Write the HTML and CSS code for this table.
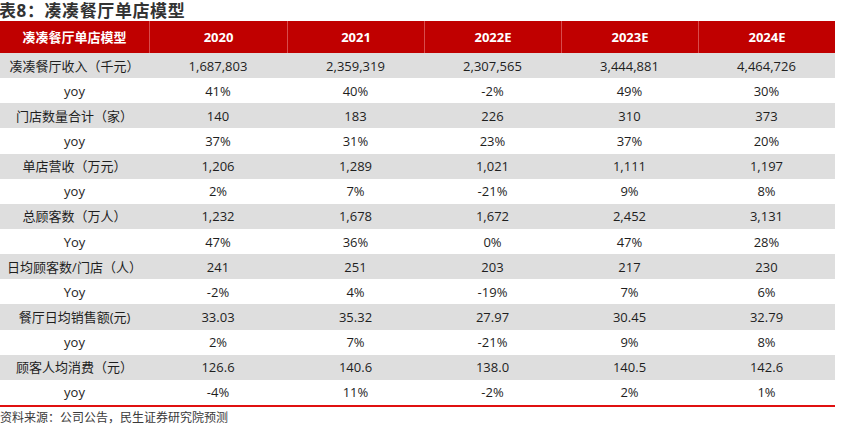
FILE: index.html
```html
<!DOCTYPE html>
<html lang="zh">
<head>
<meta charset="utf-8">
<title>凑凑餐厅单店模型</title>
<link rel="stylesheet" href="styles.css">
</head>
<body>
<div class="title">表8：凑凑餐厅单店模型</div>
<div class="table">
  <div class="row head">
    <div class="cell">凑凑餐厅单店模型</div>
    <div class="cell">2020</div>
    <div class="cell">2021</div>
    <div class="cell">2022E</div>
    <div class="cell">2023E</div>
    <div class="cell">2024E</div>
  </div>
  <div class="row shade">
    <div class="cell">凑凑餐厅收入（千元）</div>
    <div class="cell">1,687,803</div><div class="cell">2,359,319</div><div class="cell">2,307,565</div><div class="cell">3,444,881</div><div class="cell">4,464,726</div>
  </div>
  <div class="row">
    <div class="cell">yoy</div>
    <div class="cell">41%</div><div class="cell">40%</div><div class="cell">-2%</div><div class="cell">49%</div><div class="cell">30%</div>
  </div>
  <div class="row shade">
    <div class="cell">门店数量合计（家）</div>
    <div class="cell">140</div><div class="cell">183</div><div class="cell">226</div><div class="cell">310</div><div class="cell">373</div>
  </div>
  <div class="row">
    <div class="cell">yoy</div>
    <div class="cell">37%</div><div class="cell">31%</div><div class="cell">23%</div><div class="cell">37%</div><div class="cell">20%</div>
  </div>
  <div class="row shade">
    <div class="cell">单店营收（万元）</div>
    <div class="cell">1,206</div><div class="cell">1,289</div><div class="cell">1,021</div><div class="cell">1,111</div><div class="cell">1,197</div>
  </div>
  <div class="row">
    <div class="cell">yoy</div>
    <div class="cell">2%</div><div class="cell">7%</div><div class="cell">-21%</div><div class="cell">9%</div><div class="cell">8%</div>
  </div>
  <div class="row shade">
    <div class="cell">总顾客数（万人）</div>
    <div class="cell">1,232</div><div class="cell">1,678</div><div class="cell">1,672</div><div class="cell">2,452</div><div class="cell">3,131</div>
  </div>
  <div class="row">
    <div class="cell">Yoy</div>
    <div class="cell">47%</div><div class="cell">36%</div><div class="cell">0%</div><div class="cell">47%</div><div class="cell">28%</div>
  </div>
  <div class="row shade">
    <div class="cell">日均顾客数/门店（人）</div>
    <div class="cell">241</div><div class="cell">251</div><div class="cell">203</div><div class="cell">217</div><div class="cell">230</div>
  </div>
  <div class="row">
    <div class="cell">Yoy</div>
    <div class="cell">-2%</div><div class="cell">4%</div><div class="cell">-19%</div><div class="cell">7%</div><div class="cell">6%</div>
  </div>
  <div class="row shade">
    <div class="cell">餐厅日均销售额(元)</div>
    <div class="cell">33.03</div><div class="cell">35.32</div><div class="cell">27.97</div><div class="cell">30.45</div><div class="cell">32.79</div>
  </div>
  <div class="row">
    <div class="cell">yoy</div>
    <div class="cell">2%</div><div class="cell">7%</div><div class="cell">-21%</div><div class="cell">9%</div><div class="cell">8%</div>
  </div>
  <div class="row shade">
    <div class="cell">顾客人均消费（元）</div>
    <div class="cell">126.6</div><div class="cell">140.6</div><div class="cell">138.0</div><div class="cell">140.5</div><div class="cell">142.6</div>
  </div>
  <div class="row last">
    <div class="cell">yoy</div>
    <div class="cell">-4%</div><div class="cell">11%</div><div class="cell">-2%</div><div class="cell">2%</div><div class="cell">1%</div>
  </div>
</div>
<div class="source">资料来源：公司公告，民生证券研究院预测</div>
</body>
</html>
```
FILE: styles.css
```css
html, body {
  margin: 0;
  padding: 0;
  background: #ffffff;
}
body {
  font-family: "Open Sans", "Noto Sans CJK SC", sans-serif;
  color: #1e1e1e;
}
.title {
  height: 21px;
  line-height: 21px;
  font-size: 17px;
  font-weight: 700;
  color: #333333;
  letter-spacing: 0.6px;
  white-space: nowrap;
  margin-left: -1px;
}
.table {
  width: 835px;
  border-bottom: 2px solid #e01010;
}
.row {
  display: grid;
  grid-template-columns: 149px 138px 137px 137px 137px 137px;
  height: calc(352px / 14);
  align-items: center;
  font-size: 13px;
}
.row.shade {
  background: #dedede;
}
.row.head {
  height: 32px;
  background: #c00000;
  color: #ffffff;
  font-weight: 700;
  align-items: stretch;
}
.row.head .cell {
  display: flex;
  align-items: center;
  justify-content: center;
}
.row.head .cell + .cell {
  border-left: 1px solid #d84c4c;
}
.cell {
  text-align: center;
  white-space: nowrap;
  line-height: 18px;
}
.source {
  margin-top: 1px;
  line-height: 20px;
  font-size: 12px;
  color: #3a3a3a;
  white-space: nowrap;
}
```
